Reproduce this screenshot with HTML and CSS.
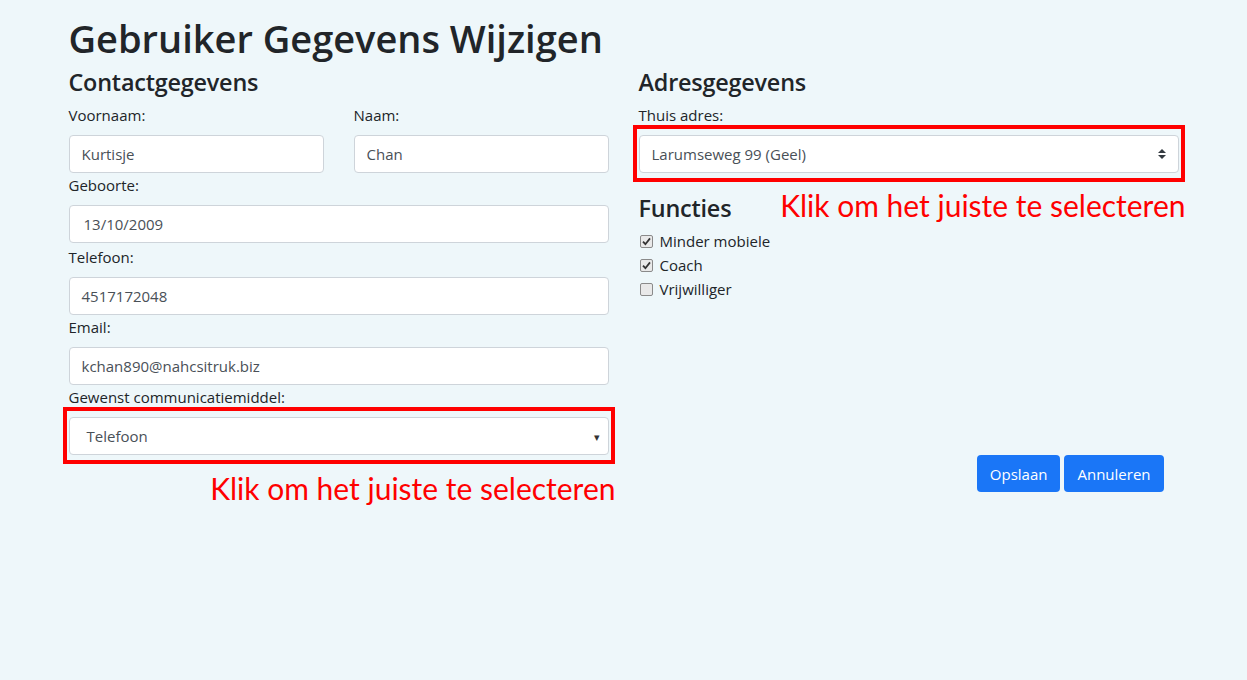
FILE: index.html
```html
<!DOCTYPE html>
<html lang="nl">
<head>
<meta charset="utf-8">
<title>Gebruiker Gegevens Wijzigen</title>
<link rel="stylesheet" href="styles.css">
</head>
<body>
<div class="container">
  <h1 class="title">Gebruiker Gegevens Wijzigen</h1>
  <div class="row">
    <div class="col">
      <h4 class="heading">Contactgegevens</h4>
      <div class="pair">
        <div class="field">
          <div class="label">Voornaam:</div>
          <div class="control">Kurtisje</div>
        </div>
        <div class="field">
          <div class="label">Naam:</div>
          <div class="control">Chan</div>
        </div>
      </div>
      <div class="label">Geboorte:</div>
      <div class="control date">13/10/2009</div>
      <div class="label">Telefoon:</div>
      <div class="control">4517172048</div>
      <div class="label">Email:</div>
      <div class="control">kchan890@nahcsitruk.biz</div>
      <div class="label">Gewenst communicatiemiddel:</div>
      <div class="marked">
        <div class="control select-native"><span>Telefoon</span><span class="caret">&#9662;</span></div>
      </div>
      <div class="note note-left">Klik om het juiste te selecteren</div>
    </div>
    <div class="col">
      <h4 class="heading">Adresgegevens</h4>
      <div class="label">Thuis adres:</div>
      <div class="marked">
        <div class="control select-custom"><span>Larumseweg 99 (Geel)</span>
          <svg class="updown" width="8" height="10" viewBox="0 0 8 10"><path d="M4 0 L8 4 L0 4 Z M4 10 L8 6 L0 6 Z" fill="#343a40"/></svg>
        </div>
        <div class="note note-right">Klik om het juiste te selecteren</div>
      </div>
      <h4 class="heading functies">Functies</h4>
      <div class="checks">
        <div class="check"><span class="box"><svg width="9" height="9" viewBox="0 0 9 9"><path d="M1 4.6 L3.4 7.2 L8 1.4" fill="none" stroke="#333" stroke-width="1.8"/></svg></span>Minder mobiele</div>
        <div class="check"><span class="box"><svg width="9" height="9" viewBox="0 0 9 9"><path d="M1 4.6 L3.4 7.2 L8 1.4" fill="none" stroke="#333" stroke-width="1.8"/></svg></span>Coach</div>
        <div class="check"><span class="box"></span>Vrijwilliger</div>
      </div>
      <div class="buttons">
        <button class="btn">Opslaan</button>
        <button class="btn">Annuleren</button>
      </div>
    </div>
  </div>
</div>
</body>
</html>
```

FILE: styles.css
```css
body {
  margin: 0;
  background: #eef7fa;
  font-family: "Open Sans", "Noto Sans", sans-serif;
  color: #212529;
}
.container {
  width: 1140px;
  margin: 0 auto;
  padding: 14px 15px 0;
  box-sizing: border-box;
}
.title {
  font-size: 38px;
  line-height: 48px;
  font-weight: 600;
  margin: 0 0 6px;
}
.row {
  display: flex;
  gap: 30px;
}
.col {
  width: 540px;
}
.heading {
  font-size: 23.4px;
  line-height: 29px;
  font-weight: 600;
  margin: 0 0 6px;
  letter-spacing: -0.2px;
}
.label {
  font-size: 15px;
  line-height: 24px;
  margin-bottom: 8px;
}
.pair {
  display: flex;
  gap: 30px;
}
.field {
  flex: 1;
}
.control {
  height: 38px;
  box-sizing: border-box;
  border: 1px solid #ced4da;
  border-radius: 4px;
  background: #fff;
  padding: 0 12px;
  font-size: 15px;
  line-height: 36px;
  color: #495057;
}
.date {
  padding-left: 14px;
  margin-bottom: 2px;
}
.marked {
  position: relative;
}
.marked::after {
  content: "";
  position: absolute;
  left: -6px;
  right: -6px;
  top: -10px;
  bottom: -9px;
  border: 4px solid #ff0000;
  pointer-events: none;
}
.select-native {
  display: flex;
  justify-content: space-between;
  align-items: center;
  padding: 0 8px 0 17px;
}
.caret {
  font-size: 11px;
  color: #333;
  line-height: 1;
}
.select-custom {
  display: flex;
  justify-content: space-between;
  align-items: center;
  padding: 0 12px 0 12px;
}
.note {
  font-family: "Lato", "Open Sans", sans-serif;
  font-size: 30px;
  line-height: 36px;
  color: #ff0000;
  white-space: nowrap;
}
.note-left {
  text-align: right;
  margin: 15px -7px 0 0;
}
.note-right {
  position: absolute;
  right: -7px;
  top: calc(100% + 14px);
}
.functies {
  margin-top: 21px;
  margin-bottom: 6px;
}
.check {
  display: flex;
  align-items: center;
  font-size: 15px;
  line-height: 24px;
}
.box {
  width: 11px;
  height: 11px;
  border: 1px solid #8a8a8a;
  border-radius: 2px;
  background: #e9e9e9;
  margin: 0 7px 0 1px;
  display: flex;
  align-items: center;
  justify-content: center;
}
.buttons {
  display: flex;
  justify-content: flex-end;
  gap: 4px;
  padding-right: 15px;
  margin-top: 154px;
}
.btn {
  height: 37px;
  padding: 0 13px;
  border: none;
  border-radius: 4px;
  background: #1a76f7;
  color: #fff;
  font-family: "Open Sans", sans-serif;
  font-size: 15px;
}
```
